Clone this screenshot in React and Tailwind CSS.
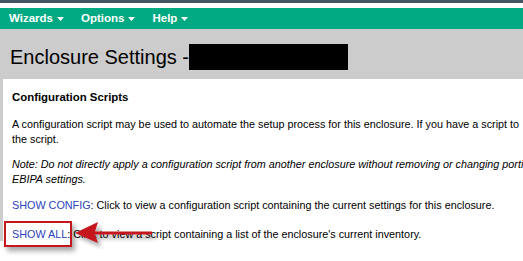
// Top navigation menu item with the small white caret
function MenuItem({ label }) {
  return (
    <div className="flex items-center gap-[4px]">
      <span>{label}</span>
      <svg width="7" height="4" viewBox="0 0 7 4" className="mt-[1px]">
        <path d="M0 0h7L3.5 4z" fill="#fff" />
      </svg>
    </div>
  )
}

export default function App() {
  return (
    <div className="relative h-[261px] w-[523px] overflow-hidden bg-white font-['Liberation_Sans',Arial,sans-serif] text-black">
      {/* Masthead strips */}
      <div className="h-[3px] bg-[#425563]" />
      <div className="h-[5px] bg-white" />
      <nav className="flex h-[21px] items-center gap-[17px] bg-[#01a982] pl-[9px] text-[11.5px] font-bold text-white">
        <MenuItem label="Wizards" />
        <MenuItem label="Options" />
        <MenuItem label="Help" />
      </nav>

      {/* Page title */}
      <div className="flex h-[50px] items-center bg-[#cccccc] pl-[10px] pt-[6px]">
        <h1 className="text-[20px] leading-none">Enclosure Settings -</h1>
        <div className="h-[26px] w-[159px] bg-black" />
      </div>

      {/* Content panel */}
      <div className="w-[680px] border-l-[3px] border-[#cccccc] pl-[9px] pt-[11px] text-[10.8px] leading-[14.5px]">
        <h2 className="text-[11.4px] font-bold leading-[14px]">Configuration Scripts</h2>
        <p className="mt-[13px]">
          A configuration script may be used to automate the setup process for this enclosure. If you have a script to
          <br />
          the script.
        </p>
        <p className="mt-[11px] italic">
          Note: Do not directly apply a configuration script from another enclosure without removing or changing portions of
          <br />
          EBIPA settings.
        </p>
        <p className="mt-[12px]">
          <a className="text-[#2a3fbd]">SHOW CONFIG</a>: Click to view a configuration script containing the current settings for this enclosure.
        </p>
        <p className="mt-[14px]">
          <a className="text-[#2a3fbd]">SHOW ALL</a>: Click to view a script containing a list of the enclosure's current inventory.
        </p>
      </div>

      {/* Annotation: highlight box and arrow */}
      <div className="absolute left-[4px] top-[221px] h-[26px] w-[68px] border-2 border-[#c4161c] shadow-[3px_4px_5px_rgba(0,0,0,0.35)]" />
      <svg
        className="absolute left-[73px] top-[219px]"
        width="90"
        height="32"
        viewBox="0 0 90 32"
      >
        <defs>
          <filter id="sh" x="-20%" y="-40%" width="150%" height="200%">
            <feDropShadow dx="3" dy="4" stdDeviation="2" floodColor="#000" floodOpacity="0.35" />
          </filter>
        </defs>
        <g filter="url(#sh)">
          <path d="M2 14 L25 3 L22 12.5 L79 12.5 L79 15.5 L22 15.5 L25 24 Z" fill="#c4161c" />
        </g>
      </svg>
    </div>
  )
}
